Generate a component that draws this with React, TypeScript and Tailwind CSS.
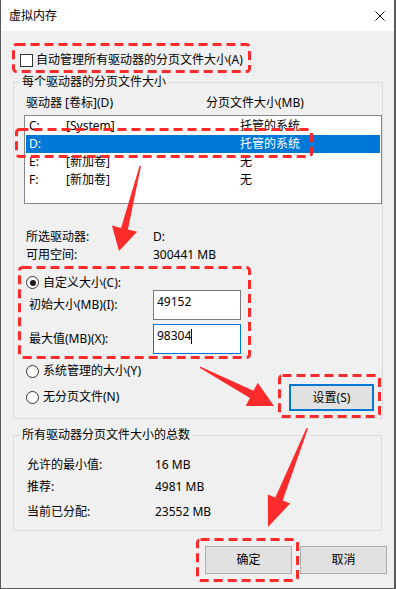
import React from 'react'

const RED = '#fb2b2b'

type Drive = { d: string; label: string; size: string; selected?: boolean }

const drives: Drive[] = [
  { d: 'C:', label: '[System]', size: '托管的系统' },
  { d: 'D:', label: '', size: '托管的系统', selected: true },
  { d: 'E:', label: '[新加卷]', size: '无' },
  { d: 'F:', label: '[新加卷]', size: '无' },
]

function Checkbox() {
  return <span className="block w-[13px] h-[13px] border border-[#333] bg-white shrink-0" />
}

function Radio({ checked }: { checked?: boolean }) {
  return (
    <span className="flex items-center justify-center w-[13px] h-[13px] rounded-full border border-[#333] bg-white shrink-0">
      {checked && <span className="block w-[6px] h-[6px] rounded-full bg-[#1a1a1a]" />}
    </span>
  )
}

function Annotations() {
  // red dashed boxes and arrows drawn over the dialog
  const boxes = [
    [13.5, 44.5, 236, 27],
    [16.5, 129.5, 295, 27],
    [19.5, 267.5, 230, 90],
    [279.5, 375.5, 100, 41],
    [197.5, 539.5, 100, 41],
  ]
  return (
    <svg className="absolute inset-0 pointer-events-none" width="396" height="589" viewBox="0 0 396 589">
      {boxes.map(([x, y, w, h], i) => (
        <rect key={i} x={x} y={y} width={w} height={h} rx="3" fill="none" stroke={RED} strokeWidth="3" strokeDasharray="9 5" />
      ))}
      <polygon fill={RED} points="139.5,166 141,166 127.9,229.5 137.1,231.8 119,251 111.9,225.6 121.1,227.9" />
      <polygon fill={RED} points="200,366.5 200,368 249.9,398 245.7,406 274,406 257.7,382.8 253.5,390.8" />
      <polygon fill={RED} points="306.5,428 308,428.5 282.7,500.5 290.2,503.4 268,527 267.8,494.6 275.3,497.5" />
    </svg>
  )
}

export default function App() {
  return (
    <div className="relative w-[396px] h-[589px] font-['Noto_Sans','Noto_Sans_CJK_SC',sans-serif] text-[12px] text-black">
      <div className="w-full h-full bg-[#f0f0f0] border-l border-r-2 border-b border-[#5a5a5a] flex flex-col">
        <div className="h-[31px] bg-white flex items-center justify-between pl-2 pr-[9px] shrink-0">
          <span className="leading-4">虚拟内存</span>
          <svg width="10" height="10" viewBox="0 0 10 10">
            <path d="M0.5 0.5 L9.5 9.5 M9.5 0.5 L0.5 9.5" stroke="#111" strokeWidth="1" />
          </svg>
        </div>

        <div className="mt-[21px] h-4 flex items-center pl-[19px]">
          <Checkbox />
          <span className="ml-[3px] leading-4">自动管理所有驱动器的分页文件大小(A)</span>
        </div>

        <fieldset className="mt-[6px] ml-[12px] w-[369px] border border-[#dcdcdc] pb-[7px]">
          <legend className="ml-[6px] px-[2px] leading-4">每个驱动器的分页文件大小</legend>
          <div className="mt-[5px] h-4 flex items-center leading-4">
            <span className="ml-[12px] w-[180px]">驱动器 [卷标](D)</span>
            <span>分页文件大小(MB)</span>
          </div>
          <div className="mt-[4px] ml-[10px] w-[358px] h-[89px] border border-[#828790] bg-white p-px">
            {drives.map((r) => (
              <div
                key={r.d}
                className={
                  r.selected
                    ? 'h-[18px] flex items-center pl-[3px] leading-4 bg-[#0078d7] text-white'
                    : 'h-[18px] flex items-center pl-[3px] leading-4'
                }
              >
                <span className="w-[37px]">{r.d}</span>
                <span className="w-[174px]">{r.label}</span>
                <span>{r.size}</span>
              </div>
            ))}
          </div>

          <div className="mt-[24px] h-[18px] flex items-center leading-4">
            <span className="ml-[12px] w-[127px]">所选驱动器:</span>
            <span>D:</span>
          </div>
          <div className="h-[18px] flex items-center leading-4">
            <span className="ml-[12px] w-[127px]">可用空间:</span>
            <span>300441 MB</span>
          </div>

          <div className="mt-[11px] h-[15px] flex items-center pl-[12px] leading-4">
            <Radio checked />
            <span className="ml-[4px]">自定义大小(C):</span>
          </div>
          <div className="h-[30px] flex items-center leading-4">
            <span className="ml-[15px] w-[124px]">初始大小(MB)(I):</span>
            <div className="w-[88px] h-[30px] border border-[#7a7a7a] bg-white pl-[3px] pt-[3px]">49152</div>
          </div>
          <div className="mt-[4px] h-[30px] flex items-center leading-4">
            <span className="ml-[15px] w-[124px]">最大值(MB)(X):</span>
            <div className="w-[88px] h-[30px] border border-[#0078d7] bg-white pl-[3px] pt-[3px] flex items-start">
              <span>98304</span>
              <span className="block w-px h-[15px] mt-[1px] bg-black" />
            </div>
          </div>

          <div className="mt-[8px] flex items-start">
            <div className="flex flex-col pl-[12px]">
              <div className="h-[18px] flex items-center leading-4">
                <Radio />
                <span className="ml-[4px]">系统管理的大小(Y)</span>
              </div>
              <div className="mt-[8px] h-[18px] flex items-center leading-4">
                <Radio />
                <span className="ml-[4px]">无分页文件(N)</span>
              </div>
            </div>
            <div className="ml-auto mr-[8px] mt-[22px] w-[85px] h-[27px] border-2 border-[#0078d7] bg-[#e1e1e1] flex items-center justify-center leading-4">
              设置(S)
            </div>
          </div>
        </fieldset>

        <fieldset className="mt-[8px] ml-[12px] w-[369px] border border-[#dcdcdc] pb-[10px]">
          <legend className="ml-[6px] px-[2px] leading-4">所有驱动器分页文件大小的总数</legend>
          <div className="mt-[14px] h-4 flex items-center leading-4">
            <span className="ml-[13px] w-[128px]">允许的最小值:</span>
            <span>16 MB</span>
          </div>
          <div className="mt-[6px] h-4 flex items-center leading-4">
            <span className="ml-[13px] w-[128px]">推荐:</span>
            <span>4981 MB</span>
          </div>
          <div className="mt-[9px] h-4 flex items-center leading-4">
            <span className="ml-[13px] w-[128px]">当前已分配:</span>
            <span>23552 MB</span>
          </div>
        </fieldset>

        <div className="mt-[15px] flex justify-end gap-[8px] pr-[7px]">
          <div className="w-[87px] h-[28px] border border-[#adadad] bg-[#e1e1e1] flex items-center justify-center leading-4">确定</div>
          <div className="w-[87px] h-[28px] border border-[#adadad] bg-[#e1e1e1] flex items-center justify-center leading-4">取消</div>
        </div>
      </div>
      <Annotations />
    </div>
  )
}
